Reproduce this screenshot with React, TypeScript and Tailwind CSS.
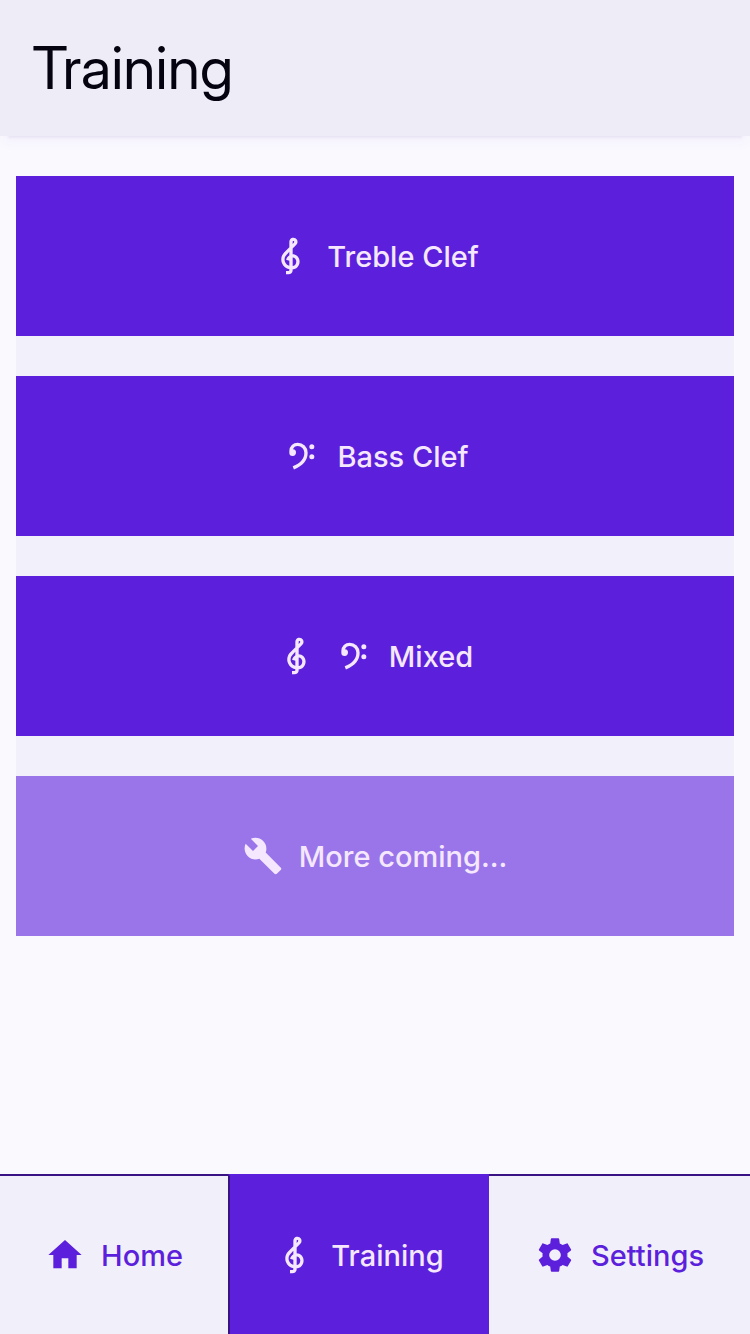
import type { ReactNode } from "react";

const icons = {
  treble:
    "M13 11V7.5L15.2 5.29C16 4.5 16.15 3.24 15.59 2.26C15.14 1.47 14.32 1 13.45 1C13.24 1 13 1.03 12.81 1.09C11.73 1.38 11 2.38 11 3.5V6.74L7.86 9.91C6.2 11.6 5.7 14.13 6.61 16.34C7.38 18.24 9.06 19.55 11 19.89V20.5C11 20.76 10.77 21 10.5 21H9V23H10.5C11.85 23 13 21.89 13 20.5V20C15.03 20 17.16 18.08 17.16 15.25C17.16 12.95 15.24 11 13 11M13 3.5C13 3.27 13.11 3.09 13.32 3.03C13.54 2.97 13.77 3.06 13.88 3.26C14 3.46 13.96 3.71 13.8 3.87L13 4.73V3.5M11 11.5C10.03 12.14 9.3 13.24 9.04 14.26L11 14.78V17.83C9.87 17.53 8.9 16.71 8.43 15.57C7.84 14.11 8.16 12.45 9.26 11.33L11 9.5V11.5M13 18V12.94C14.17 12.94 15.18 14.04 15.18 15.25C15.18 17 13.91 18 13 18Z",
  bass: "M18.5 5A1.5 1.5 0 1 1 17 6.5A1.5 1.5 0 0 1 18.5 5M18.5 11A1.5 1.5 0 1 1 17 12.5A1.5 1.5 0 0 1 18.5 11M10 4A5 5 0 0 0 5 9V10A2 2 0 1 0 7.18 8A3 3 0 0 1 10 6A4 4 0 0 1 14 10C14 13.59 11.77 16.19 7 18.2L7.76 20.04C13.31 17.72 16 14.43 16 10A6 6 0 0 0 10 4Z",
  wrench:
    "M22.7,19L13.6,9.9C14.5,7.6 14,4.9 12.1,3C10.1,1 7.1,0.6 4.7,1.7L9,6L6,9L1.6,4.7C0.4,7.1 0.9,10.1 2.9,12.1C4.8,14 7.5,14.5 9.8,13.6L18.9,22.7C19.3,23.1 19.9,23.1 20.3,22.7L22.6,20.4C23.1,20 23.1,19.3 22.7,19Z",
  home: "M10,20V14H14V20H19V12H22L12,3L2,12H5V20H10Z",
  cog: "M12,15.5A3.5,3.5 0 0,1 8.5,12A3.5,3.5 0 0,1 12,8.5A3.5,3.5 0 0,1 15.5,12A3.5,3.5 0 0,1 12,15.5M19.43,12.97C19.47,12.65 19.5,12.33 19.5,12C19.5,11.67 19.47,11.34 19.43,11L21.54,9.37C21.73,9.22 21.78,8.95 21.66,8.73L19.66,5.27C19.54,5.05 19.27,4.96 19.05,5.05L16.56,6.05C16.04,5.66 15.5,5.32 14.87,5.07L14.5,2.42C14.46,2.18 14.25,2 14,2H10C9.75,2 9.54,2.18 9.5,2.42L9.13,5.07C8.5,5.32 7.96,5.66 7.44,6.05L4.95,5.05C4.73,4.96 4.46,5.05 4.34,5.27L2.34,8.73C2.21,8.95 2.27,9.22 2.46,9.37L4.57,11C4.53,11.34 4.5,11.67 4.5,12C4.5,12.33 4.53,12.65 4.57,12.97L2.46,14.63C2.27,14.78 2.21,15.05 2.34,15.27L4.34,18.73C4.46,18.95 4.73,19.03 4.95,18.95L7.44,17.94C7.96,18.34 8.5,18.68 9.13,18.93L9.5,21.58C9.54,21.82 9.75,22 10,22H14C14.25,22 14.46,21.82 14.5,21.58L14.87,18.93C15.5,18.67 16.04,18.34 16.56,17.94L19.05,18.95C19.27,19.03 19.54,18.95 19.66,18.73L21.66,15.27C21.78,15.05 21.73,14.78 21.54,14.63L19.43,12.97Z",
};

type IconName = keyof typeof icons;

function Icon({ name }: { name: IconName }) {
  return (
    <svg viewBox="0 0 24 24" className="size-10 shrink-0 fill-current" aria-hidden="true">
      <path d={icons[name]} />
    </svg>
  );
}

function ModeButton({ glyphs, disabled, children }: { glyphs: IconName[]; disabled?: boolean; children: ReactNode }) {
  return (
    <button
      type="button"
      disabled={disabled}
      className="flex h-40 w-full items-center justify-center gap-4 bg-[#5c1fdb] text-[#f5e8fe] disabled:bg-[#9a75ea]"
    >
      {glyphs.map((name) => (
        <Icon key={name} name={name} />
      ))}
      <span>{children}</span>
    </button>
  );
}

function NavLink({ glyph, active, children }: { glyph: IconName; active?: boolean; children: ReactNode }) {
  return (
    <a
      href="#"
      aria-current={active ? "page" : undefined}
      className={
        active
          ? "flex items-center justify-center gap-4 border-t-2 border-l-2 border-t-[#5c1fdb] border-l-[#3b1283] bg-[#5c1fdb] text-[#f5e8fe]"
          : "flex items-center justify-center gap-4 border-t-2 border-[#3b1283] text-[#5c1fdb]"
      }
    >
      <Icon name={glyph} />
      <span>{children}</span>
    </a>
  );
}

export default function App() {
  return (
    <div className="flex min-h-screen flex-col bg-[#faf9fe] font-[Inter,sans-serif] text-[29px] leading-[41px] font-[450]">
      <header className="bg-[#eeecf6] px-8 py-8 shadow-[0_8px_12px_-2px_rgba(92,31,219,0.04),0_10px_2px_-8px_rgba(60,50,100,0.06)]">
        <h1 className="font-['Inter_Display',Inter,sans-serif] text-[59px] leading-[72px] font-normal text-[#05030f]">
          Training
        </h1>
      </header>
      <main className="flex-1 px-4 py-10">
        <div className="flex flex-col gap-10 bg-[#f2f0fa]">
          <ModeButton glyphs={["treble"]}>Treble Clef</ModeButton>
          <ModeButton glyphs={["bass"]}>Bass Clef</ModeButton>
          <ModeButton glyphs={["treble", "bass"]}>Mixed</ModeButton>
          <ModeButton glyphs={["wrench"]} disabled>
            More coming...
          </ModeButton>
        </div>
      </main>
      <nav className="grid h-40 grid-cols-[228fr_261fr_261fr] bg-[#f1effa]">
        <NavLink glyph="home">Home</NavLink>
        <NavLink glyph="treble" active>
          Training
        </NavLink>
        <NavLink glyph="cog">Settings</NavLink>
      </nav>
    </div>
  );
}
